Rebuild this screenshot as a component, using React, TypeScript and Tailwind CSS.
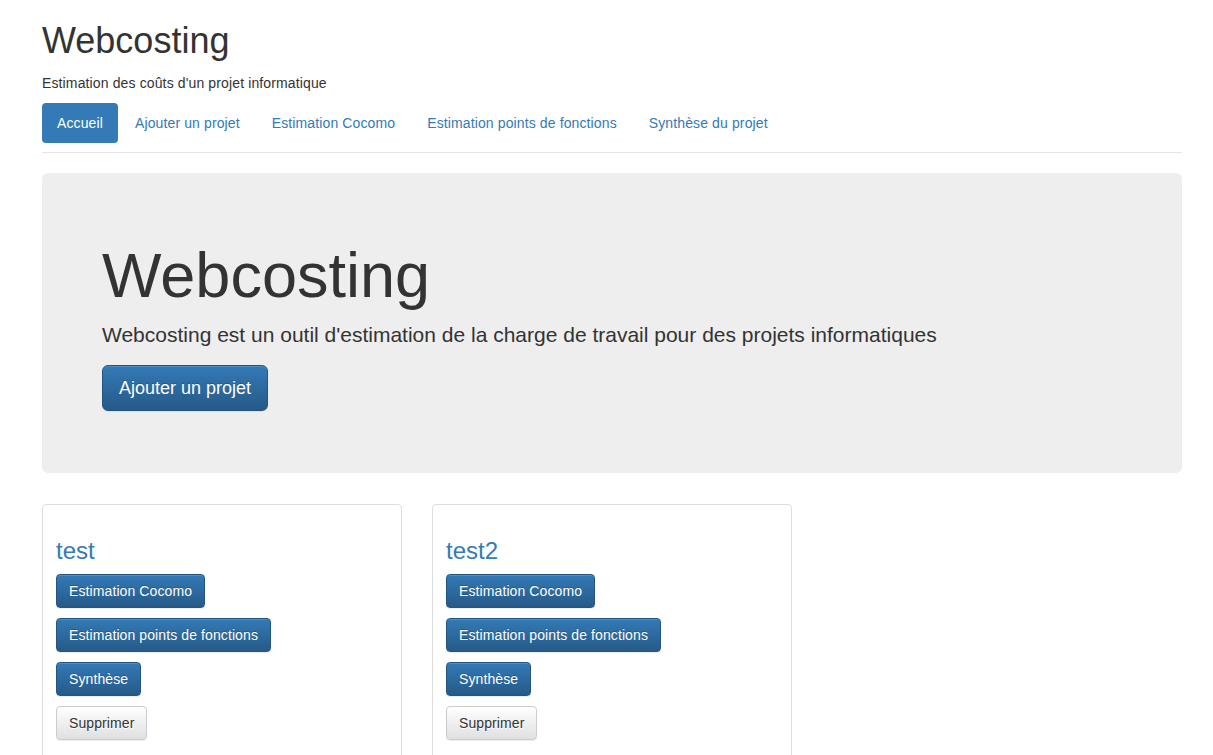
const navItems = ['Ajouter un projet', 'Estimation Cocomo', 'Estimation points de fonctions', 'Synthèse du projet']

const projects = ['test', 'test2']

function PrimaryButton({ label }: { label: string }) {
  return (
    <button className="h-[34px] px-3 rounded-[4px] border border-[#245580] bg-gradient-to-b from-[#337ab7] to-[#265a88] text-white text-[14px] leading-[20px] tracking-[0.1px] [text-shadow:0_-1px_0_rgba(0,0,0,0.2)] shadow-[inset_0_1px_0_rgba(255,255,255,0.15),0_1px_1px_rgba(0,0,0,0.075)]">
      {label}
    </button>
  )
}

function ProjectCard({ name }: { name: string }) {
  return (
    <div className="w-[360px] border border-[#ddd] rounded-[4px] p-[13px] pb-[3px]">
      <h3 className="mt-[20px] mb-[10px] text-[24px] leading-[26px] text-[#337ab7]">{name}</h3>
      <div className="flex flex-col items-start gap-[10px]">
        <PrimaryButton label="Estimation Cocomo" />
        <PrimaryButton label="Estimation points de fonctions" />
        <PrimaryButton label="Synthèse" />
        <button className="h-[34px] px-3 rounded-[4px] border border-[#ccc] bg-gradient-to-b from-white to-[#e0e0e0] text-[#333] text-[14px] leading-[20px] tracking-[0.1px] [text-shadow:0_1px_0_#fff] shadow-[inset_0_1px_0_rgba(255,255,255,0.15),0_1px_1px_rgba(0,0,0,0.075)]">
          Supprimer
        </button>
      </div>
      <div className="h-[20px]" />
    </div>
  )
}

export default function App() {
  return (
    <div className="min-h-screen bg-white text-[#333] font-['Liberation_Sans',Arial,sans-serif] text-[14px] leading-[20px]">
      <div className="w-[1140px] ml-[42px] pb-10">
        {/* Header */}
        <h1 className="pt-[21px] text-[36px] leading-[40px]">Webcosting</h1>
        <p className="mt-[12px] tracking-[0.13px]">Estimation des coûts d'un projet informatique</p>

        {/* Nav pills */}
        <div className="mt-[10px] pb-[9px] border-b border-[#e5e5e5]">
          <ul className="flex gap-[2px] tracking-[0.12px]">
            <li className="h-[40px] px-[15px] py-[10px] rounded-[4px] bg-[#337ab7] text-white">Accueil</li>
            {navItems.map((item) => (
              <li key={item} className="h-[40px] px-[15px] py-[10px] text-[#337ab7]">
                {item}
              </li>
            ))}
          </ul>
        </div>

        {/* Jumbotron */}
        <div className="mt-[20px] h-[300px] rounded-[6px] bg-[#eee] px-[60px] pt-[48px]">
          <h1 className="mt-[20px] text-[63px] leading-[69px]">Webcosting</h1>
          <p className="mt-[10px] text-[21px] leading-[30px]">
            Webcosting est un outil d'estimation de la charge de travail pour des projets informatiques
          </p>
          <button className="mt-[15px] h-[46px] px-4 rounded-[6px] border border-[#245580] bg-gradient-to-b from-[#337ab7] to-[#265a88] text-white text-[18px] leading-[24px] [text-shadow:0_-1px_0_rgba(0,0,0,0.2)] shadow-[inset_0_1px_0_rgba(255,255,255,0.15),0_1px_1px_rgba(0,0,0,0.075)]">
            Ajouter un projet
          </button>
        </div>

        {/* Projects */}
        <div className="mt-[31px] flex gap-[30px]">
          {projects.map((p) => (
            <ProjectCard key={p} name={p} />
          ))}
        </div>
      </div>
    </div>
  )
}
